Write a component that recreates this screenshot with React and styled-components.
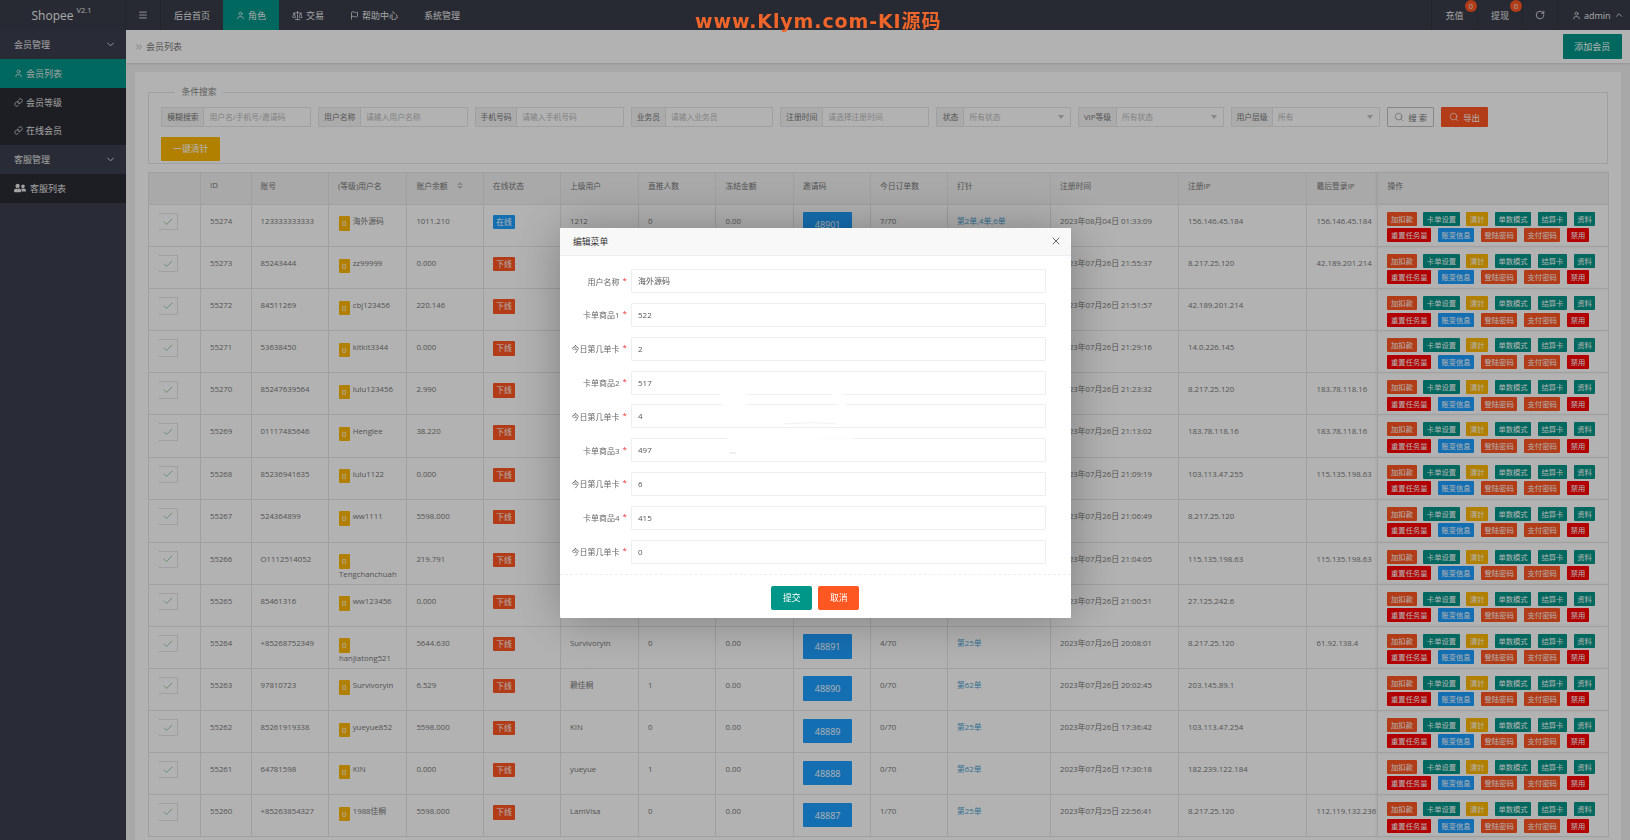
import React from 'react';
import styled, { createGlobalStyle } from 'styled-components';
import { Check, ChevronDown, ChevronUp, ChevronsRight, Flag, Link, Menu, RotateCw, Scale, Search, User, X } from 'lucide-react';
import { FaUserFriends } from 'react-icons/fa';

const TEAL = '#009688';
const ORANGE = '#ff5722';
const AMBER = '#ffb800';
const RED = '#ff0000';
const BLUE = '#1e9fff';

const GlobalStyle = createGlobalStyle`
    html, body {
        margin: 0;
        height: 100%;
        overflow: hidden;
    }
    body {
        font-family: "Open Sans", "Noto Sans CJK SC", sans-serif;
        background: #f1f1f1;
    }
`;

const Page = styled.div`
    width: 1630px;
    height: 840px;
    overflow: hidden;
    display: flex;
    flex-direction: column;
`;

/* top bar */
const Header = styled.header`
    flex: none;
    height: 30px;
    display: flex;
    align-items: stretch;
    background: #393d49;
    color: #eee;
    font-size: 9px;
`;

const Logo = styled.div`
    width: 126px;
    flex: none;
    display: flex;
    justify-content: center;
    align-items: center;
    font-size: 12px;
    border-right: 1px solid #33363f;
    box-sizing: border-box;
    padding-right: 2px;
    sup {
        font-size: 7.5px;
        margin-left: 3px;
        position: relative;
        top: -1px;
        line-height: 1;
        align-self: flex-start;
        margin-top: 8px;
    }
`;

const NavItem = styled.div`
    display: flex;
    align-items: center;
    gap: 3px;
    padding: 0 13px;
    background: ${(p) => (p.$active ? TEAL : 'transparent')};
`;

const MenuToggle = styled.div`
    width: 35px;
    box-sizing: border-box;
    display: flex;
    align-items: center;
    justify-content: center;
    padding-right: 1px;
    border-right: 1px solid #33363f;
`;

const RightNav = styled.div`
    margin-left: auto;
    display: flex;
    align-items: stretch;
`;

const RightItem = styled.div`
    width: ${(p) => p.$w}px;
    box-sizing: border-box;
    position: relative;
    display: flex;
    align-items: center;
    justify-content: ${(p) => (p.$spread ? 'flex-start' : 'center')};
    gap: 3px;
    padding-left: ${(p) => (p.$spread ? 14 : 0)}px;
    border-left: 1px solid #33363f;
`;

const CountBadge = styled.span`
    position: absolute;
    top: 0;
    right: 0;
    width: 12px;
    height: 12px;
    border-radius: 50%;
    background: ${ORANGE};
    color: #eee;
    font-size: 7.5px;
    line-height: 12px;
    text-align: center;
`;

const Watermark = styled.div`
    position: absolute;
    z-index: 3;
    left: 695px;
    top: 8px;
    color: #f0652a;
    font-family: "DejaVu Sans", "Noto Sans CJK SC", sans-serif;
    font-weight: 700;
    font-size: 19px;
    line-height: 26px;
    letter-spacing: 0.9px;
    white-space: nowrap;
`;

/* sidebar */
const Body = styled.div`
    flex: 1;
    min-height: 0;
    display: flex;
`;

const Sidebar = styled.aside`
    width: 126px;
    flex: none;
    background: #3c404e;
    color: #e8e8e8;
    font-size: 9px;
`;

const SideGroup = styled.div`
    height: 29px;
    padding: 0 10px 0 14px;
    display: flex;
    align-items: center;
    justify-content: space-between;
`;

const SideItem = styled.div`
    height: 28.7px;
    padding-left: 14px;
    display: flex;
    align-items: center;
    gap: 3px;
    background: ${(p) => (p.$active ? TEAL : '#2a2b33')};
`;

const FriendsIcon = styled(FaUserFriends)`
    margin-right: 1px;
`;

/* main column */
const Main = styled.main`
    flex: 1;
    min-width: 0;
    display: flex;
    flex-direction: column;
`;

const Crumbs = styled.div`
    flex: none;
    height: 33px;
    box-sizing: border-box;
    padding: 0 8.5px 0 8px;
    display: flex;
    align-items: center;
    gap: 2px;
    background: #fff;
    color: #777;
    font-size: 9px;
    box-shadow: 0 1px 2px rgba(0, 0, 0, 0.12);
`;

const AddButton = styled.div`
    margin-left: auto;
    width: 58.6px;
    height: 24.4px;
    border-radius: 1px;
    background: ${TEAL};
    color: #fff;
    display: flex;
    align-items: center;
    justify-content: center;
`;

const Card = styled.section`
    margin: 9px 9px 0;
    padding: 0 13px;
    flex: 1;
    min-height: 0;
    overflow: hidden;
    background: #fff;
`;

const Filters = styled.fieldset`
    margin: 15px 0 0;
    padding: 8.7px 12.4px 2px;
    border: 1px solid #e6e6e6;
    min-width: 0;
    legend {
        margin-left: 14px;
        padding: 0 6px;
        font-size: 8.8px;
        line-height: 11px;
        color: #888;
    }
`;

const FilterRow = styled.div`
    display: flex;
    gap: 7px;
`;

const Field = styled.div`
    width: ${(p) => p.$w}px;
    height: 20px;
    box-sizing: border-box;
    flex: none;
    position: relative;
    display: flex;
    align-items: center;
    border: 1px solid #e6e6e6;
    border-radius: 1px;
    font-size: 7.8px;
    color: #bbb;
`;

const FieldLabel = styled.span`
    align-self: stretch;
    width: ${(p) => p.$w}px;
    flex: none;
    box-sizing: border-box;
    display: flex;
    align-items: center;
    justify-content: center;
    background: #f5f5f5;
    border-right: 1px solid #e6e6e6;
    color: #777;
`;

const FieldText = styled.span`
    padding-left: 5px;
    white-space: nowrap;
`;

const Caret = styled.i`
    position: absolute;
    right: 6px;
    top: 7px;
    border: 3.5px solid transparent;
    border-top: 4px solid #c2c2c2;
    border-bottom: 0;
`;

const SearchButton = styled.div`
    width: 47.4px;
    height: 20px;
    box-sizing: border-box;
    flex: none;
    display: flex;
    align-items: center;
    justify-content: center;
    gap: 4px;
    border: 1px solid #c2c2c2;
    border-radius: 1px;
    color: #777;
    font-size: 8.4px;
`;

const ExportButton = styled(SearchButton)`
    width: 46.5px;
    border: 0;
    background: ${ORANGE};
    color: #fff;
`;

const ClearButton = styled.div`
    width: 58.6px;
    height: 24px;
    margin-top: 10.3px;
    border-radius: 1px;
    background: ${AMBER};
    color: #fff;
    font-size: 8.8px;
    display: flex;
    align-items: center;
    justify-content: center;
`;

/* table */
const Table = styled.table`
    margin-top: 7.6px;
    width: 1460px;
    table-layout: fixed;
    border-collapse: collapse;
    font-size: 7.8px;
    color: #777;
    tbody tr:nth-child(8) td {
        height: 43px;
    }
`;

const Col = styled.col`
    width: ${(p) => p.$w}px;
`;

const Th = styled.th`
    height: 32.4px;
    box-sizing: border-box;
    padding: 0 0 6px 9px;
    background: #f2f2f2;
    border: 1px solid #e6e6e6;
    font-weight: 400;
    text-align: left;
    white-space: nowrap;
    &:last-child {
        box-shadow: -2px 0 3px rgba(0, 0, 0, 0.07);
    }
`;

const Td = styled.td`
    height: 42.1px;
    box-sizing: border-box;
    padding: 11px 0 0 9px;
    border: 1px solid #e6e6e6;
    vertical-align: top;
    line-height: 11.4px;
`;

const CheckCell = styled(Td)`
    padding: 8px 0 0 9px;
`;

const NameCell = styled(Td)`
    padding: 11px 9px 0 10px;
    overflow-wrap: anywhere;
`;

const OpsCell = styled(Td)`
    padding: 7px 0 0 9px;
    box-shadow: -2px 0 3px rgba(0, 0, 0, 0.07);
`;

const CheckBox = styled.div`
    width: 19.5px;
    height: 17.4px;
    box-sizing: border-box;
    border: 1px solid #e6e6e6;
    border-left-color: transparent;
    border-radius: 1px;
    display: flex;
    align-items: center;
    justify-content: center;
    color: #5fb878;
`;

const LevelTag = styled.span`
    display: inline-block;
    width: 10.7px;
    height: 14.4px;
    margin-right: 1px;
    border-radius: 1px;
    background: ${AMBER};
    color: #fff;
    line-height: 15.5px;
    text-align: center;
    vertical-align: -2.5px;
    margin-top: -4px;
`;

const StatusTag = styled.span`
    display: block;
    width: 22px;
    height: 14.4px;
    margin-top: -1px;
    border-radius: 1px;
    background: ${(p) => (p.$online ? BLUE : ORANGE)};
    color: #fff;
    line-height: 15px;
    text-align: center;
`;

const InviteCode = styled.div`
    width: 49.3px;
    height: 24.6px;
    margin: -3.5px 0 0;
    border-radius: 1px;
    background: ${BLUE};
    color: #fff;
    font-size: 9px;
    line-height: 25px;
    text-align: center;
`;

const PunchLink = styled.span`
    color: #4a9fd0;
`;

const OpsRow = styled.div`
    display: flex;
    gap: 6.7px;
    & + & {
        margin-top: 2.4px;
    }
`;

const OpButton = styled.span`
    height: 14px;
    flex: none;
    padding: 0 3.6px;
    border-radius: 1px;
    background: ${(p) => p.$color};
    color: #fff;
    font-size: 7.3px;
    line-height: 14px;
    white-space: nowrap;
`;

const SortArrows = styled.i`
    display: inline-block;
    position: relative;
    width: 6px;
    height: 9px;
    margin-left: 9px;
    vertical-align: -1px;
    &::before,
    &::after {
        content: '';
        position: absolute;
        left: 0;
        border: 3px solid transparent;
    }
    &::before {
        top: -2px;
        border-bottom: 3.5px solid #c2c2c2;
    }
    &::after {
        bottom: -2px;
        border-top: 3.5px solid #c2c2c2;
    }
`;

/* dialog */
const Shade = styled.div`
    position: fixed;
    inset: 0;
    z-index: 1;
    background: rgba(0, 0, 0, 0.3);
`;

const Modal = styled.div`
    position: fixed;
    z-index: 2;
    left: 560px;
    top: 228px;
    width: 510.5px;
    height: 390px;
    background: #fff;
    box-shadow: 1px 1px 50px rgba(0, 0, 0, 0.3);
    border-radius: 1px;
`;

const ModalTitle = styled.div`
    height: 27.5px;
    box-sizing: border-box;
    padding: 0 9px 0 13px;
    display: flex;
    align-items: center;
    justify-content: space-between;
    background: #f8f8f8;
    border-bottom: 1px solid #eee;
    color: #333;
    font-size: 8.8px;
`;

const Form = styled.div`
    padding-top: 13.7px;
    display: flex;
    flex-direction: column;
    gap: 9.8px;
`;

const FormRow = styled.div`
    display: flex;
    align-items: center;
    height: 24px;
`;

const FormLabel = styled.label`
    width: 67px;
    margin-right: 3.5px;
    flex: none;
    text-align: right;
    color: #666;
    font-size: 8px;
    white-space: nowrap;
    em {
        color: #e33;
        font-style: normal;
        margin-left: 3px;
        position: relative;
        top: -2px;
    }
`;

const FormInput = styled.div`
    width: 415px;
    height: 24px;
    box-sizing: border-box;
    padding-left: 6.5px;
    border: 1px solid #eee;
    border-radius: 1px;
    color: #555;
    font-size: 8px;
    line-height: 22px;
`;

const ModalFooter = styled.div`
    margin-top: 10.4px;
    padding-top: 10.6px;
    border-top: 1px dashed #eee;
    display: flex;
    justify-content: center;
    gap: 6px;
`;

const ModalButton = styled.div`
    width: 41px;
    height: 24.4px;
    border-radius: 2px;
    background: ${(p) => p.$color};
    color: #fff;
    font-size: 8.8px;
    line-height: 24.4px;
    text-align: center;
`;

const Streaks = styled.svg`
    position: absolute;
    left: 140px;
    top: 150px;
    pointer-events: none;
`;

const COLS = [52, 50.5, 77.5, 78.4, 76.6, 77, 78, 77.5, 77.5, 77, 77, 103, 128, 128.5, 71, 231];
const HEADS = ['', 'ID', '账号', '(等级)用户名', '账户余额', '在线状态', '上级用户', '直推人数', '冻结金额', '邀请码', '今日订单数', '打针', '注册时间', '注册IP', '最后登录IP', '操作'];

const ROWS = [
    [55274, '123333333333', '海外源码', '1011.210', '1212', '0', '0.00', '7/70', '第2单,4单,6单', '2023年08月04日 01:33:09', '156.146.45.184', '156.146.45.184', true],
    [55273, '85243444', 'zz99999', '0.000', '', '', '', '', '', '2023年07月26日 21:55:37', '8.217.25.120', '42.189.201.214'],
    [55272, '84511269', 'cbj123456', '220.146', '', '', '', '', '', '2023年07月26日 21:51:57', '42.189.201.214', ''],
    [55271, '53638450', 'kitkit3344', '0.000', '', '', '', '', '', '2023年07月26日 21:29:16', '14.0.226.145', ''],
    [55270, '85247639564', 'lulu123456', '2.990', '', '', '', '', '', '2023年07月26日 21:23:32', '8.217.25.120', '183.78.118.16'],
    [55269, '01117485646', 'Henglee', '38.220', '', '', '', '', '', '2023年07月26日 21:13:02', '183.78.118.16', '183.78.118.16'],
    [55268, '85236941635', 'lulu1122', '0.000', '', '', '', '', '', '2023年07月26日 21:09:19', '103.113.47.255', '115.135.198.63'],
    [55267, '524364899', 'ww1111', '5598.000', '', '', '', '', '', '2023年07月26日 21:06:49', '8.217.25.120', ''],
    [55266, 'O1112514052', 'Tengchanchuah', '219.791', '', '', '', '', '', '2023年07月26日 21:04:05', '115.135.198.63', '115.135.198.63'],
    [55265, '85461316', 'ww123456', '0.000', '', '', '', '', '', '2023年07月26日 21:00:51', '27.125.242.6', ''],
    [55264, '+85268752349', 'hanjiatong521', '5644.630', 'Survivoryin', '0', '0.00', '4/70', '第25单', '2023年07月26日 20:08:01', '8.217.25.120', '61.92.138.4'],
    [55263, '97810723', 'Survivoryin', '6.529', '赖佳桐', '1', '0.00', '0/70', '第62单', '2023年07月26日 20:02:45', '203.145.89.1', ''],
    [55262, '85261919338', 'yueyue852', '5598.000', 'KIN', '0', '0.00', '0/70', '第25单', '2023年07月26日 17:36:42', '103.113.47.254', ''],
    [55261, '64781598', 'KIN', '0.000', 'yueyue', '1', '0.00', '0/70', '第62单', '2023年07月26日 17:30:18', '182.239.122.184', ''],
    [55260, '+85263854327', '1988佳桐', '5598.000', 'LamVisa', '0', '0.00', '1/70', '第25单', '2023年07月25日 22:56:41', '8.217.25.120', '112.119.132.236'],
];

const OPS = [
    [['加扣款', ORANGE], ['卡单设置', TEAL], ['清针', AMBER], ['单数模式', TEAL], ['结算卡', TEAL], ['资料', TEAL]],
    [['重置任务量', RED], ['账变信息', BLUE], ['登陆密码', ORANGE], ['支付密码', ORANGE], ['禁用', RED]],
];

const FILTERS = [
    ['模糊搜索', '用户名/手机号/邀请码', 150, 42],
    ['用户名称', '请输入用户名称', 149.5, 41.6],
    ['手机号码', '请输入手机号码', 149, 41.4],
    ['业务员', '请输入业务员', 142.3, 34],
    ['注册时间', '请选择注册时间', 149.3, 42],
    ['状态', '所有状态', 134.5, 27, true],
    ['VIP等级', '所有状态', 146, 38, true],
    ['用户层级', '所有', 149, 41, true],
];

const FORM = [
    ['用户名称', '海外源码'],
    ['卡单商品1', '522'],
    ['今日第几单卡', '2'],
    ['卡单商品2', '517'],
    ['今日第几单卡', '4'],
    ['卡单商品3', '497'],
    ['今日第几单卡', '6'],
    ['卡单商品4', '415'],
    ['今日第几单卡', '0'],
];

function MemberRow({ row }) {
    const [id, account, name, balance, parent, direct, frozen, orders, punch, time, regIp, lastIp, online] = row;
    return (
        <tr>
            <CheckCell>
                <CheckBox>
                    <Check size={12} strokeWidth={1.3} />
                </CheckBox>
            </CheckCell>
            <Td>{id}</Td>
            <Td>{account}</Td>
            <NameCell>
                <LevelTag>0</LevelTag> {name}
            </NameCell>
            <Td>{balance}</Td>
            <Td>
                <StatusTag $online={online}>{online ? '在线' : '下线'}</StatusTag>
            </Td>
            <Td>{parent}</Td>
            <Td>{direct}</Td>
            <Td>{frozen}</Td>
            <Td>{orders && <InviteCode>{id - 6373}</InviteCode>}</Td>
            <Td>{orders}</Td>
            <Td>
                <PunchLink>{punch}</PunchLink>
            </Td>
            <Td>{time}</Td>
            <Td>{regIp}</Td>
            <Td>{lastIp}</Td>
            <OpsCell>
                {OPS.map((ops, i) => (
                    <OpsRow key={i}>
                        {ops.map(([label, color]) => (
                            <OpButton key={label} $color={color}>
                                {label}
                            </OpButton>
                        ))}
                    </OpsRow>
                ))}
            </OpsCell>
        </tr>
    );
}

export default function App() {
    return (
        <Page>
            <GlobalStyle />
            <Header>
                <Logo>
                    Shopee<sup>V2.1</sup>
                </Logo>
                <MenuToggle>
                    <Menu size={10} />
                </MenuToggle>
                <NavItem>后台首页</NavItem>
                <NavItem $active>
                    <User size={9} />
                    角色
                </NavItem>
                <NavItem>
                    <Scale size={11} strokeWidth={1.5} />
                    交易
                </NavItem>
                <NavItem>
                    <Flag size={9} />
                    帮助中心
                </NavItem>
                <NavItem>系统管理</NavItem>
                <RightNav>
                    <RightItem $w={46}>
                        充值
                        <CountBadge>0</CountBadge>
                    </RightItem>
                    <RightItem $w={45}>
                        提现
                        <CountBadge>0</CountBadge>
                    </RightItem>
                    <RightItem $w={35}>
                        <RotateCw size={10} />
                    </RightItem>
                    <RightItem $w={73} $spread>
                        <User size={9} />
                        admin
                        <ChevronUp size={10} />
                    </RightItem>
                </RightNav>
            </Header>
            <Body>
                <Sidebar>
                    <SideGroup>
                        会员管理
                        <ChevronDown size={11} />
                    </SideGroup>
                    <SideItem $active>
                        <User size={9} />
                        会员列表
                    </SideItem>
                    <SideItem>
                        <Link size={9} />
                        会员等级
                    </SideItem>
                    <SideItem>
                        <Link size={9} />
                        在线会员
                    </SideItem>
                    <SideGroup>
                        客服管理
                        <ChevronDown size={11} />
                    </SideGroup>
                    <SideItem>
                        <FriendsIcon size={12} />
                        客服列表
                    </SideItem>
                </Sidebar>
                <Main>
                    <Crumbs>
                        <ChevronsRight size={10} strokeWidth={1.2} />
                        会员列表
                        <AddButton>添加会员</AddButton>
                    </Crumbs>
                    <Card>
                        <Filters>
                            <legend>条件搜索</legend>
                            <FilterRow>
                                {FILTERS.map(([label, hint, w, labelW, select]) => (
                                    <Field key={label} $w={w}>
                                        <FieldLabel $w={labelW}>{label}</FieldLabel>
                                        <FieldText>{hint}</FieldText>
                                        {select && <Caret />}
                                    </Field>
                                ))}
                                <SearchButton>
                                    <Search size={10} strokeWidth={1.3} />搜 索
                                </SearchButton>
                                <ExportButton>
                                    <Search size={10} strokeWidth={1.5} />导出
                                </ExportButton>
                            </FilterRow>
                            <ClearButton>一键清针</ClearButton>
                        </Filters>
                        <Table>
                            <colgroup>
                                {COLS.map((w, i) => (
                                    <Col key={i} $w={w} />
                                ))}
                            </colgroup>
                            <thead>
                                <tr>
                                    {HEADS.map((h, i) => (
                                        <Th key={i}>
                                            {h}
                                            {h === '账户余额' && <SortArrows />}
                                        </Th>
                                    ))}
                                </tr>
                            </thead>
                            <tbody>
                                {ROWS.map((row) => (
                                    <MemberRow key={row[0]} row={row} />
                                ))}
                            </tbody>
                        </Table>
                    </Card>
                </Main>
            </Body>
            <Shade />
            <Watermark>www.Klym.com-KI源码</Watermark>
            <Modal>
                <ModalTitle>
                    编辑菜单
                    <X size={12} strokeWidth={1.5} />
                </ModalTitle>
                <Form>
                    {FORM.map(([label, value], i) => (
                        <FormRow key={i}>
                            <FormLabel>
                                {label}
                                <em>*</em>
                            </FormLabel>
                            <FormInput>{value}</FormInput>
                        </FormRow>
                    ))}
                </Form>
                <ModalFooter>
                    <ModalButton $color="#009688">提交</ModalButton>
                    <ModalButton $color="#ff5722">取消</ModalButton>
                </ModalFooter>
                <Streaks width="170" height="80" viewBox="0 0 170 80" fill="none" stroke="#fff" strokeWidth="1.5">
                    <path d="M19 16 C60 17 70 20 85 20 S130 18 150 15" />
                    <path d="M22 26 C60 27 70 31 88 31 S130 29 146 26" />
                    <path d="M26 61 C60 60 110 61 153 61" />
                    <path d="M84 46 C100 45 120 44 136 46" stroke="#f0f0f0" strokeWidth="1" />
                    <path d="M30 75 H36" stroke="#ddd" strokeWidth="1" />
                </Streaks>
            </Modal>
        </Page>
    );
}
